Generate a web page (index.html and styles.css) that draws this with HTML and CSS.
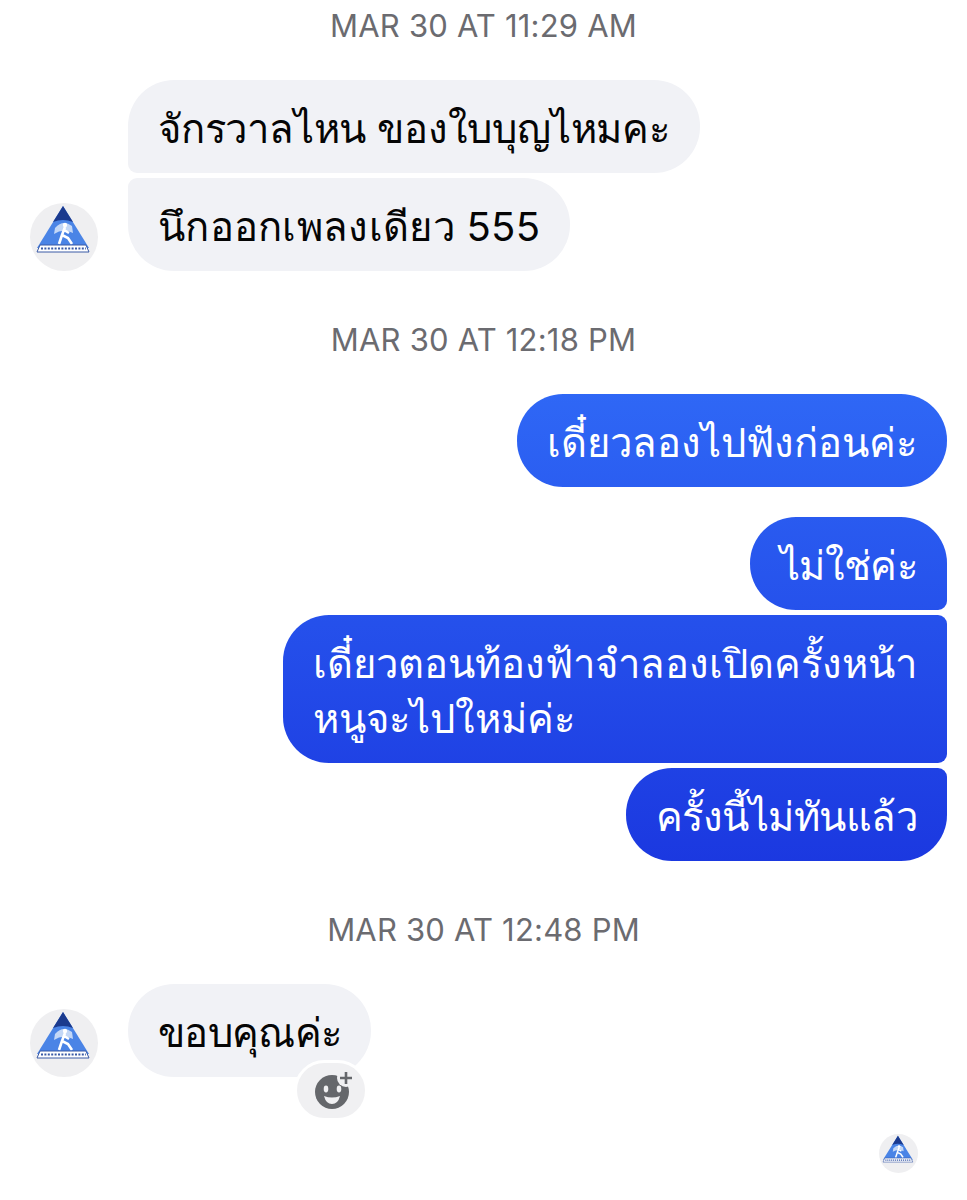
FILE: index.html
```html
<!DOCTYPE html>
<html lang="en">
<head>
    <meta charset="UTF-8">
    <meta name="viewport" content="width=device-width, initial-scale=1.0">
    <title>Messages</title>
    <link rel="stylesheet" href="styles.css">
</head>
<body>
    <svg class="defs" width="0" height="0" aria-hidden="true">
        <symbol id="logo" viewBox="0 0 68 68">
            <circle cx="34" cy="34" r="34" fill="#efeff1"/>
            <path d="M33 3 L59 45 H7 Z" fill="#4a84e6"/>
            <path d="M33 3 L43 19 Q33 15 23 19 Z" fill="#1b3a8e"/>
            <path d="M25 25 Q33 16 42 23 L43 30 Q33 25 24 31 Z" fill="#c3d7f6"/>
            <circle cx="35" cy="22" r="2.2" fill="#fff"/>
            <path d="M35 24 L32 32 L29 41 M32 32 L38 35 L42 41 M34 27 L39 30" fill="none" stroke="#fff" stroke-width="2.6"/>
            <path d="M10 42 H56 L59 49 H7 Z" fill="#fff" stroke="#3a5aa6" stroke-width="1"/>
            <path d="M11 45.5 H56" stroke="#3a5aa6" stroke-width="2" stroke-dasharray="2 1.4"/>
        </symbol>
    </svg>

    <main class="thread">
        <div class="stamp">MAR 30 AT 11:29 AM</div>
        <div class="row">
            <svg class="avatar"><use href="#logo"/></svg>
            <div class="stack">
                <div class="bubble in first tight">จักรวาลไหน ของใบบุญไหมคะ</div>
                <div class="bubble in last loose">นึกออกเพลงเดียว 555</div>
            </div>
        </div>

        <div class="stamp">MAR 30 AT 12:18 PM</div>
        <div class="stack mine">
            <div class="bubble out">เดี๋ยวลองไปฟังก่อนค่ะ</div>
        </div>
        <div class="stack mine spaced">
            <div class="bubble out first tighter">ไม่ใช่ค่ะ</div>
            <div class="bubble out middle">เดี๋ยวตอนท้องฟ้าจำลองเปิดครั้งหน้า<br>หนูจะไปใหม่ค่ะ</div>
            <div class="bubble out last snug">ครั้งนี้ไม่ทันแล้ว</div>
        </div>

        <div class="stamp">MAR 30 AT 12:48 PM</div>
        <div class="row">
            <svg class="avatar"><use href="#logo"/></svg>
            <div class="stack">
                <div class="bubble in has-react tighter">ขอบคุณค่ะ
                    <div class="react">
                        <svg viewBox="0 0 44 40" width="44" height="40">
                            <circle cx="23" cy="21" r="17" fill="#65676b"/>
                            <circle cx="37" cy="7" r="9" fill="#f0f0f2"/>
                            <ellipse cx="17" cy="18" rx="2.3" ry="3.4" fill="#f0f0f2"/>
                            <ellipse cx="30" cy="18" rx="2.3" ry="3.4" fill="#f0f0f2"/>
                            <path d="M15 25 Q23 28 31 25 Q29 33 23 33 Q17 33 15 25 Z" fill="#f0f0f2"/>
                            <path d="M37 1 V13 M31 7 H43" stroke="#65676b" stroke-width="2.6"/>
                        </svg>
                    </div>
                </div>
            </div>
        </div>

        <svg class="seen"><use href="#logo"/></svg>
    </main>
</body>
</html>
```

FILE: styles.css
```css
body {
    margin: 0;
    background-color: #ffffff;
    font-family: 'Inter', 'Noto Sans', 'Liberation Sans', sans-serif;
}
.defs {
    position: absolute;
}
.thread {
    display: flex;
    flex-direction: column;
    padding: 0 20px;
}
.stamp {
    height: 52px;
    line-height: 52px;
    margin: 43px 0 28px;
    text-align: center;
    font-size: 31px;
    letter-spacing: 0.2px;
    color: #6b6b70;
}
.stamp:first-child {
    margin-top: 0;
}
.row {
    display: flex;
    align-items: flex-end;
    gap: 30px;
    margin-left: 10px;
}
.avatar {
    width: 68px;
    height: 68px;
    flex: none;
}
.stack {
    display: flex;
    flex-direction: column;
    align-items: flex-start;
    gap: 5px;
}
.stack.mine {
    align-items: flex-end;
}
.stack.spaced {
    margin-top: 30px;
}
.bubble {
    padding: 21px 30px 17px;
    font-size: 40px;
    line-height: 55px;
    border-radius: 46px;
    white-space: nowrap;
}
.bubble.loose {
    letter-spacing: 0.3px;
}
.bubble.tight {
    letter-spacing: -0.2px;
}
.bubble.snug {
    letter-spacing: -0.5px;
}
.bubble.tighter {
    letter-spacing: -0.7px;
}
.bubble.in {
    background-color: #f1f2f6;
    color: #050505;
}
.bubble.in.first {
    border-bottom-left-radius: 9px;
}
.bubble.in.last {
    border-top-left-radius: 9px;
}
.bubble.out {
    color: #ffffff;
    /* one gradient over the whole screen, like the app does */
    background: linear-gradient(#2f68f6 32%, #1b38e0 72%) fixed;
}
.bubble.out.first {
    border-bottom-right-radius: 9px;
}
.bubble.out.middle {
    border-top-right-radius: 9px;
    border-bottom-right-radius: 9px;
}
.bubble.out.last {
    border-top-right-radius: 9px;
}
.has-react {
    position: relative;
}
.react {
    position: absolute;
    left: 166px;
    top: 76px;
    width: 74px;
    height: 61px;
    display: flex;
    align-items: center;
    justify-content: center;
    background-color: #f0f0f2;
    border: 3px solid #ffffff;
    border-radius: 32px;
    box-sizing: border-box;
}
.seen {
    width: 39px;
    height: 39px;
    align-self: flex-end;
    margin: 57px 29px 0 0;
}
```
